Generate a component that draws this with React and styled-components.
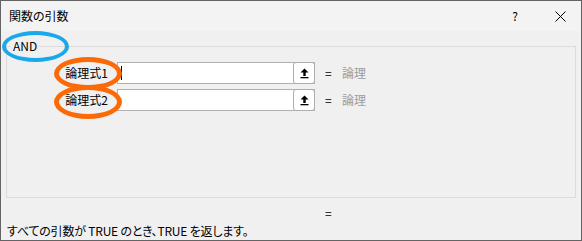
import React from "react";
import styled, { createGlobalStyle } from "styled-components";

const Global = createGlobalStyle`
  html, body { margin: 0; padding: 0; background: #f0f0f0; }
  body { font-family: "Noto Sans CJK JP", "Noto Sans", sans-serif; font-size: 12px; color: #000; }
  * { box-sizing: border-box; }
`;

const Window = styled.div`
  position: relative;
  width: 582px;
  height: 241px;
  border: 1px solid #646464;
  display: flex;
  flex-direction: column;
  background: #f0f0f0;
  overflow: hidden;
`;

const TitleBar = styled.div`
  height: 30px;
  flex: 0 0 30px;
  display: flex;
  align-items: center;
  background: #f3f3f3;
`;

const Title = styled.div`
  flex: 1;
  padding-left: 8px;
  line-height: 30px;
  font-size: 12px;
  font-feature-settings: "palt";
`;

const TitleButton = styled.div`
  width: ${(p) => p.$w}px;
  height: 30px;
  display: flex;
  align-items: center;
  justify-content: center;
  font-size: 12px;
  line-height: 30px;
`;

const Body = styled.div`
  flex: 1;
  display: flex;
  flex-direction: column;
  padding: 0 5px;
`;

const Group = styled.fieldset`
  margin: 7px 0 0 0;
  height: 160px;
  border: 1px solid #dcdcdc;
  padding: 8px 0 0 0;
  min-width: 0;
`;

const Legend = styled.legend`
  margin-left: 4px;
  padding: 0 2px;
  line-height: 16px;
  height: 16px;
  font-size: 12px;
`;

const Args = styled.div`
  display: grid;
  grid-template-columns: 106px 198px 8px auto;
  grid-auto-rows: 22px;
  column-gap: 4px;
  row-gap: 5px;
  align-items: center;
`;

const Label = styled.div`
  text-align: right;
  padding-right: 5px;
  line-height: 22px;
  font-size: 12px;
  white-space: nowrap;
`;

const InputBox = styled.div`
  height: 22px;
  display: flex;
  border: 1px solid #b1b1b1;
  background: #fff;
`;

const Field = styled.div`
  flex: 1;
  padding: 3px 0 0 3px;
`;

const Caret = styled.div`
  width: 1px;
  height: 14px;
  background: #000;
`;

const RefButton = styled.div`
  width: 22px;
  height: 22px;
  margin: -1px -1px -1px 0;
  border: 1px solid #adadad;
  border-radius: 3px;
  background: #fff;
  display: flex;
  align-items: center;
  justify-content: center;
`;

const Eq = styled.div`
  margin-left: 6px;
  line-height: 22px;
  font-size: 12px;
`;

const Value = styled.div`
  margin-left: 11px;
  line-height: 22px;
  font-size: 12px;
  color: #9b9b9b;
`;

const ResultRow = styled.div`
  margin-top: 7px;
  padding-left: 319px;
  line-height: 16px;
  font-size: 12px;
`;

const Description = styled.div`
  margin-top: 2px;
  padding-left: 1px;
  line-height: 16px;
  font-size: 12px;
  letter-spacing: -0.2px;
  font-feature-settings: "palt";
  white-space: nowrap;
`;

const Ring = styled.div`
  position: absolute;
  left: ${(p) => p.$x}px;
  top: ${(p) => p.$y}px;
  width: ${(p) => p.$w}px;
  height: ${(p) => p.$h}px;
  border: ${(p) => p.$s}px solid ${(p) => p.$color};
  border-radius: 50%;
  pointer-events: none;
`;

const RefIcon = () => (
  <svg width="9" height="11" viewBox="0 0 9 11">
    <polygon points="4.5,0.5 8.5,4.5 5.7,4.5 5.7,8 3.3,8 3.3,4.5 0.5,4.5" fill="#000" />
    <rect x="0.5" y="9" width="8" height="1.3" fill="#000" />
  </svg>
);

const CloseIcon = () => (
  <svg width="11" height="11" viewBox="0 0 11 11">
    <path d="M0.5 0.5 L10.5 10.5 M10.5 0.5 L0.5 10.5" stroke="#000" strokeWidth="1" fill="none" />
  </svg>
);

const args = [
  { label: "論理式1", caret: true },
  { label: "論理式2", caret: false },
];

export default function App() {
  return (
    <>
      <Global />
      <Window>
        <TitleBar>
          <Title>関数の引数</Title>
          <TitleButton $w={48}>?</TitleButton>
          <TitleButton $w={42}>
            <CloseIcon />
          </TitleButton>
        </TitleBar>
        <Body>
          <Group>
            <Legend>AND</Legend>
            <Args>
              {args.map((a) => (
                <React.Fragment key={a.label}>
                  <Label>{a.label}</Label>
                  <InputBox>
                    <Field>{a.caret && <Caret />}</Field>
                    <RefButton>
                      <RefIcon />
                    </RefButton>
                  </InputBox>
                  <Eq>=</Eq>
                  <Value>論理</Value>
                </React.Fragment>
              ))}
            </Args>
          </Group>
          <ResultRow>=</ResultRow>
          <Description>すべての引数が TRUE のとき、TRUE を返します。</Description>
        </Body>
        <Ring $x={1} $y={30} $w={67} $h={31} $s={4} $color="#1aa8ec" />
        <Ring $x={53} $y={56} $w={68} $h={33} $s={5} $color="#fb6a07" />
        <Ring $x={53} $y={84} $w={68} $h={34} $s={5} $color="#fb6a07" />
      </Window>
    </>
  );
}
